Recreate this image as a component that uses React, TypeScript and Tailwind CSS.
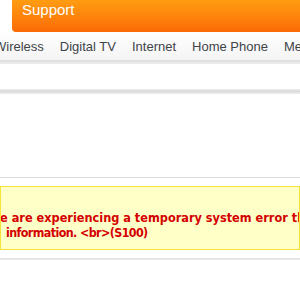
export default function App() {
  const nav = ["Wireless", "Digital TV", "Internet", "Home Phone", "Me"];

  return (
    <div className="w-[300px] h-[300px] overflow-hidden bg-white font-['Liberation_Sans',Arial,sans-serif]">
      {/* Orange header */}
      <div className="flex h-[32px]">
        <div className="w-[12px] shrink-0" />
        <div className="flex-1 rounded-bl-[4px] bg-gradient-to-b from-[#ff9c12] to-[#fb6a06] pl-[10px]">
          <div className="text-[15px] leading-none text-white pt-[2px]">Support</div>
        </div>
      </div>

      {/* Nav bar */}
      <div className="h-[28px] bg-gradient-to-b from-white to-[#f4f4f4] flex items-center whitespace-nowrap -ml-[14px] pt-[2px]">
        {nav.map((item) => (
          <span key={item} className="px-[8px] text-[13px] text-[#404448]">
            {item}
          </span>
        ))}
      </div>
      <div className="h-[4px] bg-gradient-to-b from-[#dcdcdc] to-[#efefef]" />

      {/* Empty strip */}
      <div className="h-[25px]" />
      <div className="h-[5px] bg-gradient-to-b from-[#ececec] via-[#dadada] to-[#f2f2f2]" />

      <div className="h-[83px]" />
      <div className="h-px bg-[#dcdcdc]" />

      {/* Error box */}
      <div className="pt-[8px]">
        <div className="h-[64px] border border-[#f6e238] bg-[#ffffc8] pt-[23px] font-['DejaVu_Sans_Condensed','DejaVu_Sans',sans-serif] [font-stretch:condensed] font-bold leading-[15px] text-[#d40000] whitespace-nowrap overflow-hidden">
          <div className="-ml-[13px] text-[12.6px]">We are experiencing a temporary system error that prevents us from displaying your</div>
          <div className="ml-[5px] text-[12.4px] tracking-[-0.6px]">information. &lt;br&gt;(S100)</div>
        </div>
      </div>

      <div className="h-[8px]" />
      <div className="h-[2px] bg-gradient-to-b from-[#dddddd] to-[#f0f0f0]" />
    </div>
  );
}
